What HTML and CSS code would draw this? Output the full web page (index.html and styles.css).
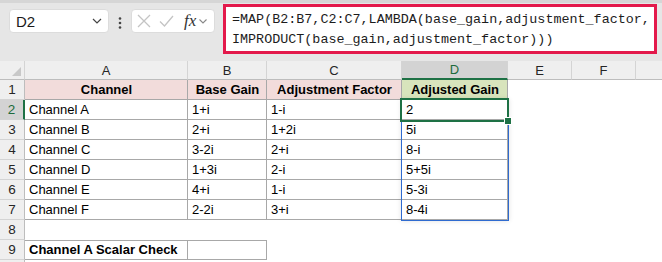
FILE: index.html
```html
<!DOCTYPE html>
<html>

<head>
    <meta charset="utf-8">
    <title>IMPRODUCT with MAP</title>
    <link rel="stylesheet" href="styles.css">
</head>

<body>
    <div class="toolbar">
        <div class="namebox">
            <span>D2</span>
            <svg width="10" height="6" viewBox="0 0 10 6"><path d="M1 1l4 4 4-4" fill="none" stroke="#444" stroke-width="1.2"/></svg>
        </div>
        <svg class="dots" width="4" height="12" viewBox="0 0 4 12"><circle cx="2" cy="1.5" r="1.3" fill="#444"/><circle cx="2" cy="6" r="1.3" fill="#444"/><circle cx="2" cy="10.5" r="1.3" fill="#444"/></svg>
        <div class="fxbox">
            <svg width="14" height="14" viewBox="0 0 14 14"><path d="M1 1l12 12M13 1L1 13" stroke="#c4c4c4" stroke-width="1.3"/></svg>
            <svg width="15" height="12" viewBox="0 0 15 12"><path d="M1 6.5l4.5 4.5L14 1" fill="none" stroke="#c4c4c4" stroke-width="1.3"/></svg>
            <span class="fx">fx</span>
            <svg width="8" height="5" viewBox="0 0 8 5"><path d="M0.5 0.5l3.5 3.5 3.5-3.5" fill="none" stroke="#888" stroke-width="1.1"/></svg>
        </div>
        <div class="formula">=MAP(B2:B7,C2:C7,LAMBDA(base_gain,adjustment_factor,<br>IMPRODUCT(base_gain,adjustment_factor)))</div>
    </div>

    <div class="sheet">
        <div class="h corner"></div><div class="h">A</div><div class="h">B</div><div class="h">C</div><div class="h sel">D</div><div class="h">E</div><div class="h">F</div><div class="h last"></div>

        <div class="r">1</div><div class="t b pink">Channel</div><div class="t b pink">Base Gain</div><div class="t b pink">Adjustment Factor</div><div class="t b green">Adjusted Gain</div><div></div><div></div><div></div>
        <div class="r sel">2</div><div class="t">Channel A</div><div class="t">1+i</div><div class="t">1-i</div><div class="t">2</div><div></div><div></div><div></div>
        <div class="r">3</div><div class="t">Channel B</div><div class="t">2+i</div><div class="t">1+2i</div><div class="t">5i</div><div></div><div></div><div></div>
        <div class="r">4</div><div class="t">Channel C</div><div class="t">3-2i</div><div class="t">2+i</div><div class="t">8-i</div><div></div><div></div><div></div>
        <div class="r">5</div><div class="t">Channel D</div><div class="t">1+3i</div><div class="t">2-i</div><div class="t">5+5i</div><div></div><div></div><div></div>
        <div class="r">6</div><div class="t">Channel E</div><div class="t">4+i</div><div class="t">1-i</div><div class="t">5-3i</div><div></div><div></div><div></div>
        <div class="r">7</div><div class="t">Channel F</div><div class="t">2-2i</div><div class="t">3+i</div><div class="t">8-4i</div><div></div><div></div><div></div>
        <div class="r">8</div><div></div><div></div><div></div><div></div><div></div><div></div><div></div>
        <div class="r">9</div><div class="t top bold">Channel A Scalar Check</div><div class="t top"></div><div></div><div></div><div></div><div></div><div></div>
        <div class="r"></div>

        <div class="range"></div>
        <div class="active"><span class="handle"></span></div>
    </div>
</body>

</html>
```

FILE: styles.css
```css
body {
    margin: 0;
    font-family: "Liberation Sans", Arial, sans-serif;
    font-size: 13px;
    color: #000;
    background-color: white;
    overflow: hidden;
}

.toolbar {
    height: 58px;
    border-top: 3px solid #d6d6d6;
    background-color: #e6e6e6;
    display: flex;
    align-items: flex-start;
    padding-left: 9px;
}

.namebox {
    margin-top: 6px;
    width: 100px;
    height: 24px;
    box-sizing: border-box;
    background: #fff;
    border: 1px solid #dcdcdc;
    border-radius: 4px;
    display: flex;
    align-items: center;
    justify-content: space-between;
    padding: 0 6px 0 6px;
    font-size: 15px;
    color: #1a1a1a;
}

.dots {
    margin: 14px 0 0 9px;
}

.fxbox {
    margin: 6px 0 0 9px;
    width: 84px;
    height: 24px;
    box-sizing: border-box;
    background: #fff;
    border: 1px solid #dcdcdc;
    border-radius: 4px;
    display: flex;
    align-items: center;
    padding: 0 4px 0 5px;
    gap: 8px;
}

.fx {
    font-family: "Liberation Serif", serif;
    font-style: italic;
    font-size: 17px;
    color: #333;
    margin-left: 2px;
    margin-right: -5px;
}

.formula {
    margin: 1px 0 0 8px;
    width: 434px;
    height: 50px;
    box-sizing: border-box;
    background: #fff;
    border: 3px solid #e3194b;
    padding: 3px 0 0 6px;
    font-family: "Liberation Mono", monospace;
    font-size: 13.4px;
    line-height: 19.5px;
    color: #1c1c1c;
    white-space: nowrap;
}

.sheet {
    position: relative;
    display: grid;
    grid-template-columns: 25px 163px 79px 135px 106px 64px 64px 1fr;
    grid-template-rows: 19px repeat(10, 20px);
}

.sheet > div {
    line-height: 20px;
    white-space: nowrap;
    overflow: hidden;
}

.h {
    background: #efefef;
    border-right: 1px solid #d4d4d4;
    border-bottom: 1px solid #bdbdbd;
    text-align: center;
    line-height: 19px !important;
    color: #262626;
}

.h.last {
    border-right: 0;
}

.corner {
    position: relative;
}

.corner::after {
    content: "";
    position: absolute;
    right: 3px;
    bottom: 3px;
    border-left: 9px solid transparent;
    border-bottom: 9px solid #c8c8c8;
}

.r {
    background: #efefef;
    border-right: 1px solid #bdbdbd;
    border-bottom: 1px solid #d4d4d4;
    box-sizing: border-box;
    text-align: center;
    color: #262626;
    font-size: 13.5px;
}

.h.sel {
    background: #d3d3d3;
    color: #1d6b3c;
    border-bottom: 2px solid #1e7145;
    line-height: 18px !important;
}

.r.sel {
    background: #d3d3d3;
    color: #1d6b3c;
    border-right: 2px solid #1e7145;
}

.t {
    box-shadow: inset -1px -1px 0 #a8a8a8;
    padding-left: 4px;
}

.t.top {
    box-shadow: inset -1px -1px 0 #a8a8a8, inset 0 1px 0 #a8a8a8;
}

.b {
    font-weight: bold;
    text-align: center;
    padding-left: 0;
}

.bold {
    font-weight: bold;
}

.pink {
    background: #f2dcdb;
}

.green {
    background: #d8e4bc;
}

.range {
    position: absolute;
    left: 401px;
    top: 38px;
    width: 106px;
    height: 120px;
    border: 1px solid #2f6bd0;
    box-shadow: 0 0 5px rgba(0, 0, 0, 0.12);
}

.active {
    position: absolute;
    left: 400px;
    top: 37px;
    width: 105px;
    height: 20px;
    border: 2px solid #1e7145;
    overflow: visible !important;
}

.handle {
    position: absolute;
    right: -5px;
    bottom: -5px;
    width: 6px;
    height: 6px;
    background: #1e7145;
    border: 1px solid #fff;
}
```
